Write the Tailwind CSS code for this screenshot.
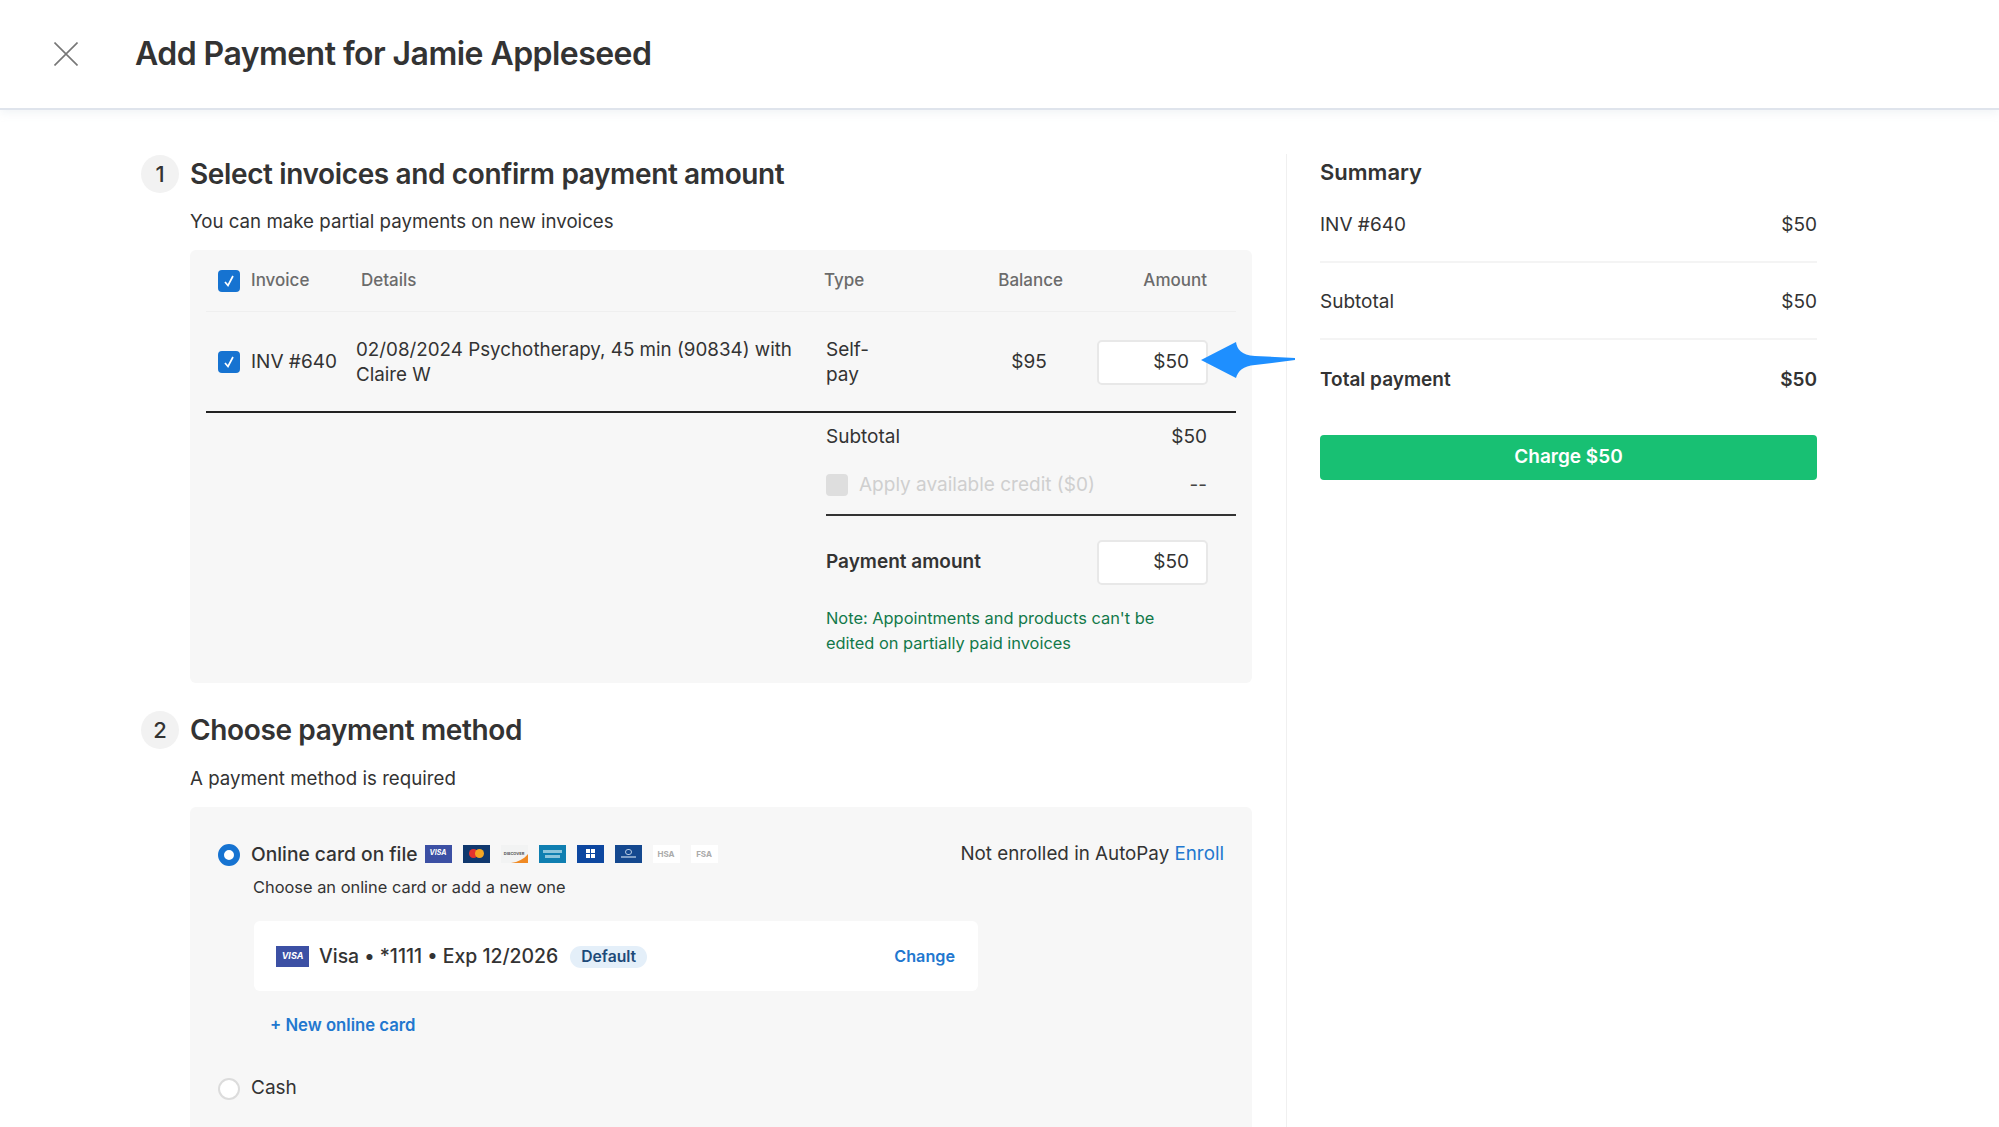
<!DOCTYPE html>
<html lang="en">
  <head>
    <meta charset="UTF-8" />
    <meta name="viewport" content="width=device-width, initial-scale=1.0" />
    <title>Add Payment for Jamie Appleseed</title>
    <script src="https://cdn.jsdelivr.net/npm/@tailwindcss/browser@4"></script>
  </head>
  <body class="bg-white font-['Inter',sans-serif] text-[#333] h-[1127px] overflow-hidden">
    <!-- Header -->
    <header class="flex items-center h-[110px] border-b-2 border-[#dfe4ec] shadow-[0_3px_8px_rgba(200,210,225,0.25)]">
      <svg class="ml-[54px] w-[24px] h-[24px]" viewBox="0 0 24 24" fill="none" stroke="#777" stroke-width="1.6">
        <path d="M0.5 0.5 L23.5 23.5 M23.5 0.5 L0.5 23.5" />
      </svg>
      <h1 class="ml-[57px] text-[32px] font-semibold tracking-[-0.55px] text-[#333]">Add Payment for Jamie Appleseed</h1>
    </header>

    <main class="flex pl-[141px] pt-[44px]">
      <div class="w-[1111px] shrink-0">
        <!-- Step 1 -->
        <div class="flex items-center h-[40px]">
          <span class="flex items-center justify-center w-[38px] h-[38px] rounded-full bg-[#f2f2f2] text-[22px] font-medium">1</span>
          <h2 class="ml-[11px] text-[28px] font-semibold tracking-[-0.37px] text-[#333]">Select invoices and confirm payment amount</h2>
        </div>
        <p class="ml-[49px] mt-[16px] h-[23px] leading-[23px] text-[18.7px]">You can make partial payments on new invoices</p>

        <section class="ml-[49px] mt-[17px] w-[1062px] h-[433px] bg-[#f7f7f7] rounded-md px-4">
          <!-- Table head -->
          <div class="flex items-center h-[62px] pl-3 pr-[29px] border-b border-[#efefef] text-[17px] font-medium text-[#6b6b6b]">
            <div class="w-[143px] flex items-center">
              <span class="flex items-center justify-center w-[22px] h-[22px] rounded-[4px] bg-[#1673d1]">
                <svg class="w-[14px] h-[14px]" viewBox="0 0 14 14" fill="none" stroke="#fff" stroke-width="1.7"><path d="M3 8 L6 11.5 L11 2" /></svg>
              </span>
              <span class="ml-[11px] mt-[1px]">Invoice</span>
            </div>
            <div class="w-[463px] mt-[1px]">Details</div>
            <div class="w-[100px] mt-[1px]">Type</div>
            <div class="w-[139px] mt-[1px] text-right">Balance</div>
            <div class="flex-1 mt-[1px] text-right">Amount</div>
          </div>
          <!-- Invoice row -->
          <div class="flex items-center h-[101px] pl-3 pr-[28px] border-b-2 border-[#222] text-[19px]">
            <div class="w-[138px] flex items-center">
              <span class="flex items-center justify-center w-[22px] h-[22px] rounded-[4px] bg-[#1673d1]">
                <svg class="w-[14px] h-[14px]" viewBox="0 0 14 14" fill="none" stroke="#fff" stroke-width="1.7"><path d="M3 8 L6 11.5 L11 2" /></svg>
              </span>
              <span class="ml-[11px] mt-[2px]">INV #640</span>
            </div>
            <div class="w-[470px] pr-[10px] leading-[25px] text-[18.8px]">02/08/2024 Psychotherapy, 45 min (90834) with Claire W</div>
            <div class="w-[50px] leading-[25px]">Self-<br />pay</div>
            <div class="w-[220px] pl-[86px] mt-[2px] text-center">$95</div>
            <div class="relative flex-1 flex justify-end">
              <div class="w-[111px] h-[45px] mt-[1px] flex items-center justify-end pr-[17px] bg-white border-2 border-[#e8e8e8] rounded-[5px]">$50</div>
              <svg class="absolute left-[105px] top-[2px] w-[94px] h-[38px]" viewBox="0 0 94 38" fill="#1e8fff">
                <path d="M0 19 L35 1 C36 8 40 14 54 15 L94 17 L94 19 L54 24 C42 25 37 30 35 37 Z" />
              </svg>
            </div>
          </div>
          <!-- Totals -->
          <div class="ml-[620px] text-[19px]">
            <div class="flex items-center justify-between h-[47px] mt-[1px] pr-[29px]">
              <span>Subtotal</span>
              <span>$50</span>
            </div>
            <div class="flex items-center h-[55px] pb-[5px] pr-[29px] border-b-2 border-[#333] text-[#cfcfcf]">
              <span class="w-[22px] h-[22px] rounded-[4px] bg-[#dedede]"></span>
              <span class="ml-[11px]">Apply available credit ($0)</span>
              <span class="ml-auto text-[#444]">--</span>
            </div>
            <div class="flex items-center justify-between h-[92px] pr-[28px]">
              <span class="font-semibold">Payment amount</span>
              <div class="w-[111px] h-[45px] flex items-center justify-end pr-[17px] bg-white border-2 border-[#e8e8e8] rounded-[5px]">$50</div>
            </div>
            <p class="w-[345px] -mt-[2px] text-[16.4px] leading-[25px] text-[#12794a]">Note: Appointments and products can't be edited on partially paid invoices</p>
          </div>
        </section>

        <!-- Step 2 -->
        <div class="flex items-center h-[40px] mt-[27px]">
          <span class="flex items-center justify-center w-[38px] h-[38px] rounded-full bg-[#f2f2f2] text-[22px] font-medium">2</span>
          <h2 class="ml-[11px] text-[28px] font-semibold tracking-[-0.37px] text-[#333]">Choose payment method</h2>
        </div>
        <p class="ml-[49px] mt-[17px] h-[23px] leading-[23px] text-[18.7px]">A payment method is required</p>

        <section class="ml-[49px] mt-[17px] w-[1062px] h-[340px] bg-[#f7f7f7] rounded-md pl-[28px] pr-[28px] pt-[34px]">
          <div class="flex items-center h-[27px]">
            <span class="w-[22px] h-[22px] rounded-full border-[6px] border-[#1673d1] bg-white"></span>
            <span class="ml-[11px] text-[19.2px] font-medium">Online card on file</span>
            <div class="flex gap-[11px] ml-[7px] -mt-[2px]">
              <span class="flex items-center justify-center w-[27px] h-[18px] bg-[#3c50a4] text-[7px] font-bold italic text-white">VISA</span>
              <span class="flex items-center justify-center w-[27px] h-[18px] bg-[#10386e]">
                <span class="w-[9px] h-[9px] rounded-full bg-[#e4332e]"></span>
                <span class="-ml-[3px] w-[9px] h-[9px] rounded-full bg-[#f5a623]"></span>
              </span>
              <span class="relative flex items-center justify-center w-[27px] h-[18px] bg-[#f2f3f3] overflow-hidden text-[4px] font-bold text-[#555]">
                DISCOVER
                <svg class="absolute left-0 bottom-0 w-[27px] h-[18px]" viewBox="0 0 27 18" fill="#f08a24"><path d="M27 9 L27 18 L10 18 C17 17 23 14 27 9 Z" /></svg>
              </span>
              <span class="flex flex-col items-center justify-center gap-[2px] w-[27px] h-[18px] bg-[#0f7fb1]">
                <span class="w-[19px] h-[3px] bg-[#8cc5dc]"></span>
                <span class="w-[15px] h-[3px] bg-[#8cc5dc]"></span>
              </span>
              <span class="flex items-center justify-center w-[27px] h-[18px] bg-[#0d47a0]">
                <span class="grid grid-cols-2 gap-[1px]">
                  <span class="w-[4px] h-[4px] bg-white"></span>
                  <span class="w-[4px] h-[4px] bg-white"></span>
                  <span class="w-[4px] h-[4px] bg-white"></span>
                  <span class="w-[4px] h-[4px] bg-white"></span>
                </span>
              </span>
              <span class="flex flex-col items-center justify-center gap-[1px] w-[27px] h-[18px] bg-[#14488f]">
                <span class="w-[7px] h-[6px] rounded-full border border-[#b8cce4]"></span>
                <span class="w-[15px] h-[2px] bg-[#7f9fc8]"></span>
              </span>
              <span class="flex items-center justify-center w-[27px] h-[18px] bg-white text-[8px] font-bold text-[#aaa]">HSA</span>
              <span class="flex items-center justify-center w-[27px] h-[18px] bg-white text-[8px] font-bold text-[#aaa]">FSA</span>
            </div>
            <span class="ml-auto text-[18.8px]">Not enrolled in AutoPay <span class="text-[#2277cf]">Enroll</span></span>
          </div>
          <p class="ml-[35px] mt-[7px] h-[24px] leading-[24px] text-[16.4px]">Choose an online card or add a new one</p>
          <div class="ml-[36px] mt-[22px] w-[724px] h-[70px] flex items-center pl-[22px] pr-[23px] bg-white rounded-md">
            <span class="flex items-center justify-center w-[33px] h-[21px] bg-[#3c50a4] text-[9px] font-bold italic text-white">VISA</span>
            <span class="ml-[10px] mt-[1px] text-[19.4px] font-medium">Visa • *1111 • Exp 12/2026</span>
            <span class="ml-[12px] mt-[1px] flex items-center justify-center w-[77px] h-[22px] rounded-full bg-[#e4eff9] text-[15.7px] font-semibold text-[#1d4a78]">Default</span>
            <span class="ml-auto text-[16.2px] font-semibold text-[#2277cf]">Change</span>
          </div>
          <p class="ml-[52px] mt-[22px] h-[24px] leading-[24px] text-[16.7px] font-semibold text-[#2277cf]">+ New online card</p>
          <div class="flex items-center h-[27px] mt-[38px]">
            <span class="w-[22px] h-[22px] rounded-full border-2 border-[#dcdcdc] bg-white"></span>
            <span class="ml-[11px] text-[19px]">Cash</span>
          </div>
        </section>
      </div>

      <!-- Summary -->
      <aside class="ml-[34px] w-[531px] h-[1000px] pl-[33px] border-l border-[#f0f0f0]">
        <h3 class="h-[36px] leading-[36px] text-[22px] font-semibold text-[#333]">Summary</h3>
        <div class="flex items-center justify-between h-[33px] mt-[19px] text-[19px]">
          <span>INV #640</span>
          <span>$50</span>
        </div>
        <div class="flex items-center justify-between h-[79px] pt-[3px] mt-[19px] border-y-2 border-[#f4f4f4] text-[19px]">
          <span>Subtotal</span>
          <span>$50</span>
        </div>
        <div class="flex items-center justify-between h-[80px] text-[19px] font-semibold">
          <span>Total payment</span>
          <span>$50</span>
        </div>
        <button class="w-full h-[45px] mt-[15px] rounded-[4px] bg-[#18c073] text-[19px] font-semibold text-white">Charge $50</button>
      </aside>
    </main>
  </body>
</html>
